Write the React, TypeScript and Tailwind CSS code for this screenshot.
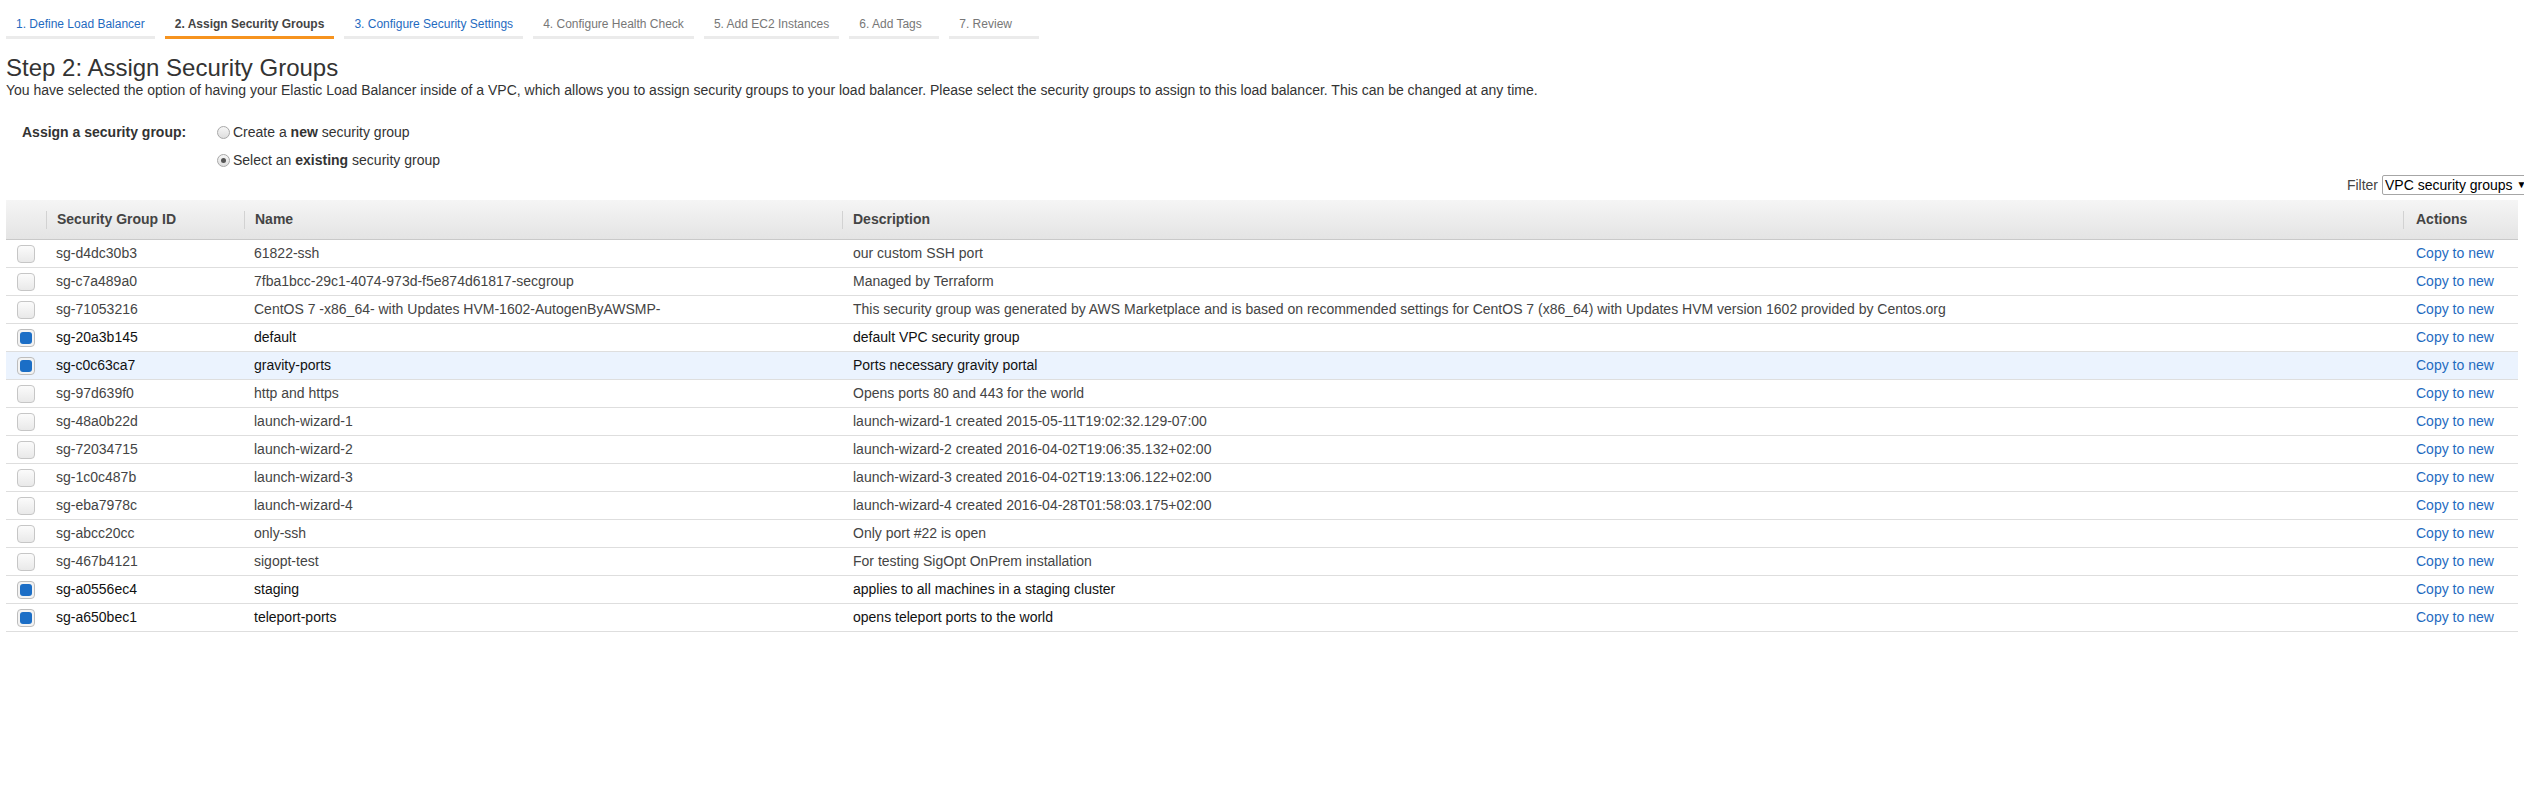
import React from "react";

type Row = { id: string; name: string; desc: string; checked?: boolean; hl?: boolean };

const rows: Row[] = [
  { id: "sg-d4dc30b3", name: "61822-ssh", desc: "our custom SSH port" },
  { id: "sg-c7a489a0", name: "7fba1bcc-29c1-4074-973d-f5e874d61817-secgroup", desc: "Managed by Terraform" },
  {
    id: "sg-71053216",
    name: "CentOS 7 -x86_64- with Updates HVM-1602-AutogenByAWSMP-",
    desc: "This security group was generated by AWS Marketplace and is based on recommended settings for CentOS 7 (x86_64) with Updates HVM version 1602 provided by Centos.org",
  },
  { id: "sg-20a3b145", name: "default", desc: "default VPC security group", checked: true },
  { id: "sg-c0c63ca7", name: "gravity-ports", desc: "Ports necessary gravity portal", checked: true, hl: true },
  { id: "sg-97d639f0", name: "http and https", desc: "Opens ports 80 and 443 for the world" },
  { id: "sg-48a0b22d", name: "launch-wizard-1", desc: "launch-wizard-1 created 2015-05-11T19:02:32.129-07:00" },
  { id: "sg-72034715", name: "launch-wizard-2", desc: "launch-wizard-2 created 2016-04-02T19:06:35.132+02:00" },
  { id: "sg-1c0c487b", name: "launch-wizard-3", desc: "launch-wizard-3 created 2016-04-02T19:13:06.122+02:00" },
  { id: "sg-eba7978c", name: "launch-wizard-4", desc: "launch-wizard-4 created 2016-04-28T01:58:03.175+02:00" },
  { id: "sg-abcc20cc", name: "only-ssh", desc: "Only port #22 is open" },
  { id: "sg-467b4121", name: "sigopt-test", desc: "For testing SigOpt OnPrem installation" },
  { id: "sg-a0556ec4", name: "staging", desc: "applies to all machines in a staging cluster", checked: true },
  { id: "sg-a650bec1", name: "teleport-ports", desc: "opens teleport ports to the world", checked: true },
];

const tabs: { label: string; kind: "link" | "active" | "future" }[] = [
  { label: "1. Define Load Balancer", kind: "link" },
  { label: "2. Assign Security Groups", kind: "active" },
  { label: "3. Configure Security Settings", kind: "link" },
  { label: "4. Configure Health Check", kind: "future" },
  { label: "5. Add EC2 Instances", kind: "future" },
  { label: "6. Add Tags", kind: "future" },
  { label: "7. Review", kind: "future" },
];

function Checkbox({ checked }: { checked?: boolean }) {
  if (checked) {
    return (
      <div className="w-[18px] h-[18px] rounded-[4px] border border-[#bdbdbd] bg-[#f3f3f3] p-[2px]">
        <div className="w-full h-full rounded-[3px] bg-[#1b6ec6]" />
      </div>
    );
  }
  return (
    <div className="w-[18px] h-[18px] rounded-[4px] border border-[#c6c6c6] bg-gradient-to-b from-[#fbfbfb] to-[#e9e9e9]" />
  );
}

function Radio({ checked }: { checked?: boolean }) {
  return (
    <div className="w-[13px] h-[13px] rounded-full border border-[#a8a8a8] bg-gradient-to-b from-[#f6f6f6] to-[#dedede] flex items-center justify-center">
      {checked && <div className="w-[5px] h-[5px] rounded-full bg-[#555]" />}
    </div>
  );
}

const grid = "grid grid-cols-[40px_198px_598px_1561px_1fr]";

function HeadCell({ label, pl = "pl-[10px]" }: { label: string; pl?: string }) {
  return (
    <div className="flex items-center h-full">
      <div className={`h-[18px] border-l border-[#d2d2d2] ${pl} flex items-center font-bold text-[#444]`}>{label}</div>
    </div>
  );
}

export default function App() {
  return (
    <div className="w-[2524px] h-[799px] overflow-hidden bg-white font-['Liberation_Sans',Arial,sans-serif] text-[#333]">
      {/* Wizard tabs */}
      <div className="flex gap-[10px] pl-[6px] pt-[17px]">
        {tabs.map((t) => (
          <div
            key={t.label}
            className={`min-w-[90px] px-[10px] pb-[5px] text-[12px] leading-[14px] border-b-[3px] ${
              t.kind === "active"
                ? "border-[#f6931f] font-bold text-[#444]"
                : t.kind === "link"
                ? "border-[#ebebeb] text-[#1f6bbf]"
                : "border-[#ebebeb] text-[#777]"
            }`}
          >
            {t.label}
          </div>
        ))}
      </div>

      {/* Heading */}
      <h1 className="mt-[16px] pl-[6px] text-[24px] leading-[26px] text-[#333] font-normal">Step 2: Assign Security Groups</h1>
      <p className="pl-[6px] text-[14px] leading-[18px] text-[#333]">
        You have selected the option of having your Elastic Load Balancer inside of a VPC, which allows you to assign security
        groups to your load balancer. Please select the security groups to assign to this load balancer. This can be changed at
        any time.
      </p>

      {/* Radio section */}
      <div className="mt-[19px] flex text-[14px]">
        <div className="w-[217px] pl-[22px] h-[28px] flex items-center font-bold text-[#333]">Assign a security group:</div>
        <div className="flex flex-col">
          <div className="h-[28px] flex items-center gap-[3px] text-[#333]">
            <Radio />
            <span>
              Create a <b>new</b> security group
            </span>
          </div>
          <div className="h-[28px] flex items-center gap-[3px] text-[#333]">
            <Radio checked />
            <span>
              Select an <b>existing</b> security group
            </span>
          </div>
        </div>
      </div>

      {/* Filter */}
      <div className="mt-[1px] flex items-center justify-end h-[20px] text-[14px]">
        <span className="text-[#444] mr-[4px]">Filter</span>
        <div className="w-[160px] -mr-[18px] h-[20px] border border-[#a6a6a6] rounded-[2px] bg-white px-[2px] flex items-center text-black leading-[18px] whitespace-nowrap">
          VPC security groups <span className="ml-[4px] text-[10px]">▼</span>
        </div>
      </div>

      {/* Table */}
      <div className="mt-[5px] mx-[6px] text-[14px]">
        <div className={`${grid} h-[40px] bg-gradient-to-b from-[#f5f5f5] to-[#e4e4e4] border-b border-[#c9c9c9]`}>
          <div />
          <HeadCell label="Security Group ID" />
          <HeadCell label="Name" />
          <HeadCell label="Description" />
          <HeadCell label="Actions" pl="pl-[12px]" />
        </div>
        {rows.map((r) => (
          <div
            key={r.id}
            className={`${grid} h-[28px] border-b border-[#dedede] ${r.hl ? "bg-[#ebf3fe]" : "bg-white"} ${
              r.checked ? "text-[#111]" : "text-[#444]"
            }`}
          >
            <div className="flex items-center pl-[11px]">
              <Checkbox checked={r.checked} />
            </div>
            <div className="flex items-center pl-[10px] whitespace-nowrap overflow-hidden">{r.id}</div>
            <div className="flex items-center pl-[10px] whitespace-nowrap overflow-hidden">{r.name}</div>
            <div className="flex items-center pl-[11px] whitespace-nowrap overflow-hidden">{r.desc}</div>
            <div className="flex items-center pl-[13px] whitespace-nowrap text-[#1f6bbf]">Copy to new</div>
          </div>
        ))}
      </div>
    </div>
  );
}
